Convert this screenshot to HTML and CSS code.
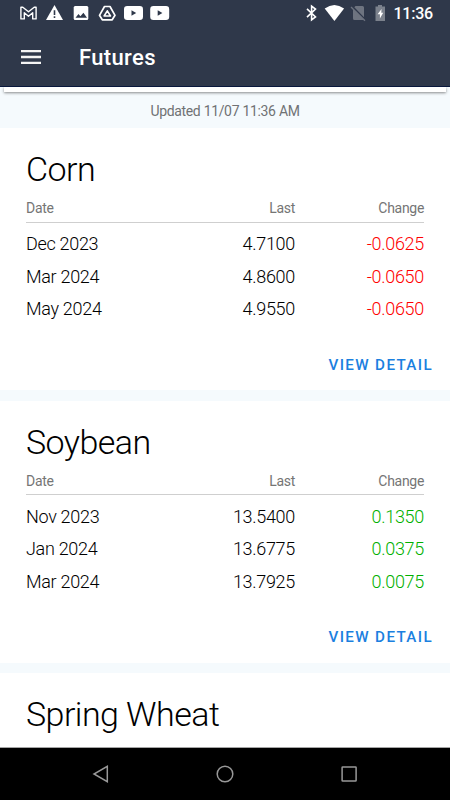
FILE: index.html
```html
<!DOCTYPE html>
<html lang="en">
<head>
    <meta charset="UTF-8">
    <meta name="viewport" content="width=device-width, initial-scale=1.0">
    <title>Futures</title>
    <link rel="stylesheet" href="styles.css">
</head>
<body>
    <div class="screen">
        <header class="header">
            <div class="status-bar">
                <svg class="notifications" width="172" height="26" viewBox="0 0 172 26">
                    <!-- mail -->
                    <path d="M20.9 18.9V7.2H22.8L28.5 11.8L34.2 7.2H36.1V18.9H32.7V12.8L28.5 16.2L24.3 12.8V18.9Z" fill="none" stroke="#fff" stroke-width="1.4" stroke-linejoin="round"/>
                    <!-- warning -->
                    <path d="M54.5 5L63 20H46Z" fill="#fff"/>
                    <path d="M54.5 10.3V15M54.5 16.3V18" stroke="#2f384a" stroke-width="1.6"/>
                    <!-- image -->
                    <rect x="73.7" y="6" width="14.6" height="14" rx="1.5" fill="#fff"/>
                    <path d="M75.5 17.8L78.5 14L80.4 16.2L83.4 12.8L87 17.8Z" fill="#2f384a"/>
                    <!-- drive -->
                    <path d="M104.5 6.5H110L115 15.3L112.2 19.8H102.3L99.5 15.3Z" fill="none" stroke="#fff" stroke-width="1.7" stroke-linejoin="round"/>
                    <path d="M107.3 10.8L110.5 16H104.1Z" fill="none" stroke="#fff" stroke-width="1.6" stroke-linejoin="round"/>
                    <!-- video -->
                    <rect x="124" y="6" width="19" height="14" rx="3.2" fill="#fff"/>
                    <path d="M131.5 10.3V15.7L136.2 13Z" fill="#2f384a"/>
                    <rect x="150.2" y="6" width="19" height="14" rx="3.2" fill="#fff"/>
                    <path d="M157.7 10.3V15.7L162.4 13Z" fill="#2f384a"/>
                </svg>
                <div class="system">
                    <svg width="84" height="26" viewBox="0 0 84 26">
                        <!-- bluetooth -->
                        <path d="M2 8.8L10.5 17L6.6 20V6L10.5 9L2 17.2" fill="none" stroke="#fff" stroke-width="1.6"/>
                        <!-- wifi -->
                        <path d="M19.7 8.6Q29.4 1.6 39.1 8.6L29.4 21Z" fill="#fff"/>
                        <!-- no sim -->
                        <path d="M50.5 6H57.5Q59 6 59 7.5V17.2L49.3 7.3ZM48 9.3L59 20H49.5Q48 20 48 18.5Z" fill="#6e7480"/>
                        <path d="M46 7L60 20.7" stroke="#6e7480" stroke-width="1.3"/>
                        <!-- battery -->
                        <path d="M73 5H77V6.5H80V21H70.5V6.5H73Z" fill="#7b818c"/>
                        <path d="M76.5 9L72.6 14.2H74.9V18.4L78.2 12.8H76.3Z" fill="#fff"/>
                    </svg>
                    <span class="clock">11:36</span>
                </div>
            </div>
            <div class="toolbar">
                <svg class="menu-icon" width="20" height="16" viewBox="0 0 20 16">
                    <path d="M0 2.2H20M0 8H20M0 13.8H20" stroke="#f4f4f4" stroke-width="2.3"/>
                </svg>
                <h1>Futures</h1>
            </div>
        </header>

        <main class="content">
            <div class="previous-card"></div>
            <p class="updated">Updated 11/07 11:36 AM</p>

            <section class="card">
                <h2>Corn</h2>
                <table>
                    <thead>
                        <tr><th>Date</th><th>Last</th><th>Change</th></tr>
                    </thead>
                    <tbody>
                        <tr><td>Dec 2023</td><td>4.7100</td><td class="down">-0.0625</td></tr>
                        <tr><td>Mar 2024</td><td>4.8600</td><td class="down">-0.0650</td></tr>
                        <tr><td>May 2024</td><td>4.9550</td><td class="down">-0.0650</td></tr>
                    </tbody>
                </table>
                <button class="detail-btn">VIEW DETAIL</button>
            </section>

            <section class="card">
                <h2>Soybean</h2>
                <table>
                    <thead>
                        <tr><th>Date</th><th>Last</th><th>Change</th></tr>
                    </thead>
                    <tbody>
                        <tr><td>Nov 2023</td><td>13.5400</td><td class="up">0.1350</td></tr>
                        <tr><td>Jan 2024</td><td>13.6775</td><td class="up">0.0375</td></tr>
                        <tr><td>Mar 2024</td><td>13.7925</td><td class="up">0.0075</td></tr>
                    </tbody>
                </table>
                <button class="detail-btn">VIEW DETAIL</button>
            </section>

            <section class="card">
                <h2>Spring Wheat</h2>
            </section>
        </main>

        <nav class="nav-bar">
            <svg width="18" height="20" viewBox="0 0 18 20">
                <path d="M15.3 2.3V17.7L2 10Z"/>
            </svg>
            <svg width="18" height="20" viewBox="0 0 18 20">
                <circle cx="9" cy="10" r="7.8"/>
            </svg>
            <svg width="18" height="20" viewBox="0 0 18 20">
                <rect x="2.1" y="3" width="14" height="14" rx=".6"/>
            </svg>
        </nav>
    </div>
</body>
</html>
```
FILE: styles.css
```css
* {
    margin: 0;
    padding: 0;
    box-sizing: border-box;
    font-family: Roboto, sans-serif;
}

body {
    background: #f5fafd;
}

.screen {
    height: 800px;
    display: flex;
    flex-direction: column;
    overflow: hidden;
}

.header {
    height: 87px;
    flex-shrink: 0;
    background: #2f384a;
    border-bottom: 1px solid #09183d;
    color: white;
}

.status-bar {
    height: 28px;
    display: flex;
    justify-content: space-between;
}

.system {
    display: flex;
    padding-right: 17px;
}

.clock {
    margin-left: 4px;
    font-size: 16px;
    font-weight: 500;
    line-height: 28px;
    letter-spacing: -0.2px;
}

.toolbar {
    height: 58px;
    display: flex;
    align-items: center;
    padding-left: 21px;
}

.menu-icon {
    margin-right: 38px;
}

.toolbar h1 {
    padding-top: 2px;
    font-size: 22px;
    font-weight: 500;
    line-height: 28px;
    letter-spacing: 0.35px;
}

.content {
    flex: 1;
    min-height: 0;
    overflow: hidden;
}

.previous-card {
    height: 5px;
    margin: 0 4px;
    background: white;
    box-shadow: 0 1px 3px rgba(0,0,0,0.45);
}

.updated {
    height: 36px;
    line-height: 38px;
    text-align: center;
    font-size: 14px;
    letter-spacing: -0.35px;
    word-spacing: 0.2px;
    color: #707274;
}

.card {
    height: 262px;
    margin-bottom: 10.5px;
    padding: 20px 26px 0;
    background: white;
    display: flex;
    flex-direction: column;
}

.card h2 {
    font-size: 34px;
    font-weight: 300;
    line-height: 42px;
    letter-spacing: -0.55px;
}

table {
    width: 398px;
    border-collapse: collapse;
    table-layout: fixed;
}

th {
    height: 32px;
    padding-top: 5px;
    font-size: 14px;
    font-weight: 400;
    letter-spacing: -0.3px;
    color: #757575;
    text-align: right;
    border-bottom: 1px solid #cfcfcf;
}

td {
    height: 32.5px;
    font-size: 18px;
    font-weight: 300;
    letter-spacing: -0.3px;
    text-align: right;
}

th:first-child,
td:first-child {
    text-align: left;
}

th:nth-child(2) {
    width: 136px;
}

th:nth-child(3) {
    width: 129px;
}

tbody::before {
    content: "";
    display: block;
    height: 5px;
}

.down {
    color: #ff0000;
}

.up {
    color: #00b000;
}

.detail-btn {
    align-self: flex-end;
    margin: 29.5px -9px 0 0;
    border: none;
    background: none;
    color: #1b80df;
    font-size: 15.2px;
    font-weight: 500;
    line-height: 20px;
    letter-spacing: 1.35px;
}

.nav-bar {
    height: 53px;
    flex-shrink: 0;
    display: flex;
    justify-content: center;
    align-items: center;
    gap: 106px;
    background: black;
    border-top: 1px solid #a5a5a5;
}

.nav-bar svg {
    fill: none;
    stroke: #989898;
    stroke-width: 1.5;
}
```
